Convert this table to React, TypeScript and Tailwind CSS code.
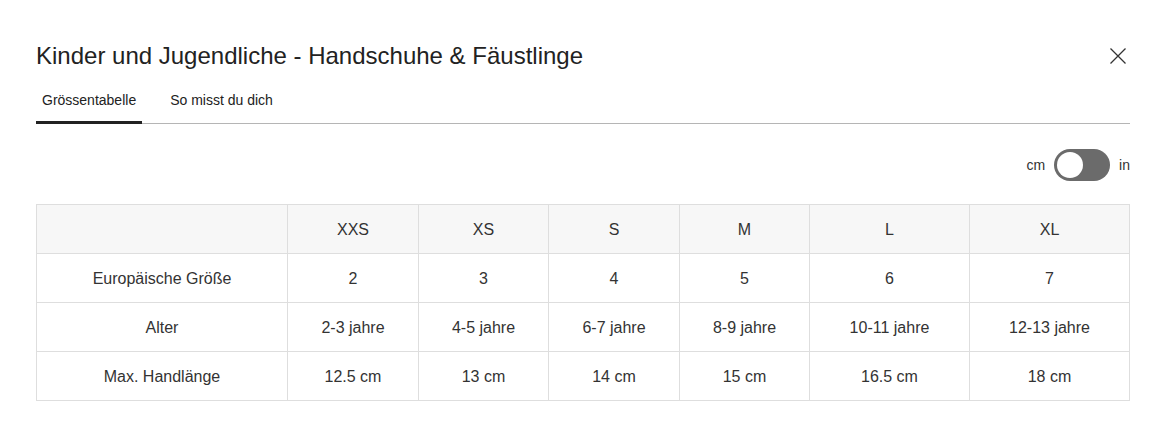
import { useState } from "react";

const sizes = ["XXS", "XS", "S", "M", "L", "XL"];

const rows = [
  { label: "Europäische Größe", values: ["2", "3", "4", "5", "6", "7"] },
  {
    label: "Alter",
    values: ["2-3 jahre", "4-5 jahre", "6-7 jahre", "8-9 jahre", "10-11 jahre", "12-13 jahre"],
  },
  {
    label: "Max. Handlänge",
    values: ["12.5 cm", "13 cm", "14 cm", "15 cm", "16.5 cm", "18 cm"],
  },
];

const colWidths = ["w-[251px]", "w-[131px]", "w-[130px]", "w-[131px]", "w-[130px]", "w-[160px]", "w-[160px]"];

export default function App() {
  const [tab, setTab] = useState(0);
  const [inches, setInches] = useState(false);

  return (
    <div className="w-[1165px] h-[442px] bg-white text-[#333] font-['Liberation_Sans',Arial,sans-serif] pl-9 pr-[35px] pt-[42px]">
      {/* Header */}
      <div className="flex items-center justify-between h-7">
        <h1 className="text-[24px] text-[#222] leading-7">
          Kinder und Jugendliche - Handschuhe &amp; Fäustlinge
        </h1>
        <button className="mr-[3px] text-[#333]">
          <svg width="18" height="18" viewBox="0 0 18 18" fill="none" stroke="currentColor" strokeWidth="1.3">
            <path d="M1.5 1.5 16.5 16.5M16.5 1.5 1.5 16.5" />
          </svg>
        </button>
      </div>

      {/* Tabs */}
      <div className="mt-[17px] flex border-b border-[#b5b5b5] h-[37px]">
        {["Grössentabelle", "So misst du dich"].map((t, i) => (
          <button
            key={t}
            onClick={() => setTab(i)}
            className={`text-[14px] text-[#222] px-[6px] pt-[3px] h-[37px] -mb-[1px] flex items-start ${
              i === 0 ? "mr-[22px]" : ""
            } ${tab === i ? "border-b-[3px] border-[#222]" : ""}`}
          >
            <span className="leading-5">{t}</span>
          </button>
        ))}
      </div>

      {/* Unit switch */}
      <div className="flex justify-end items-center mt-[25px] gap-[9px] text-[14px]">
        <span>cm</span>
        <button
          onClick={() => setInches(!inches)}
          className={`w-[56px] h-[32px] rounded-full bg-[#6b6b6b] p-[3px] flex ${inches ? "justify-end" : "justify-start"}`}
        >
          <span className="w-[26px] h-[26px] rounded-full bg-white" />
        </button>
        <span>in</span>
      </div>

      {/* Table */}
      <table className="mt-[23px] border-collapse text-[16px] table-fixed w-[1094px]">
        <colgroup>
          {colWidths.map((w, i) => (
            <col key={i} className={w} />
          ))}
        </colgroup>
        <thead>
          <tr className="bg-[#f7f7f7] h-[49px]">
            <th className="border border-[#dedede] font-normal pt-[1px]"></th>
            {sizes.map((s) => (
              <th key={s} className="border border-[#dedede] font-normal pt-[1px]">
                {s}
              </th>
            ))}
          </tr>
        </thead>
        <tbody>
          {rows.map((r) => (
            <tr key={r.label} className="h-[49px]">
              <td className="border border-[#dedede] text-center pt-[1px]">{r.label}</td>
              {r.values.map((v, i) => (
                <td key={i} className="border border-[#dedede] text-center pt-[1px]">
                  {v}
                </td>
              ))}
            </tr>
          ))}
        </tbody>
      </table>
    </div>
  );
}
